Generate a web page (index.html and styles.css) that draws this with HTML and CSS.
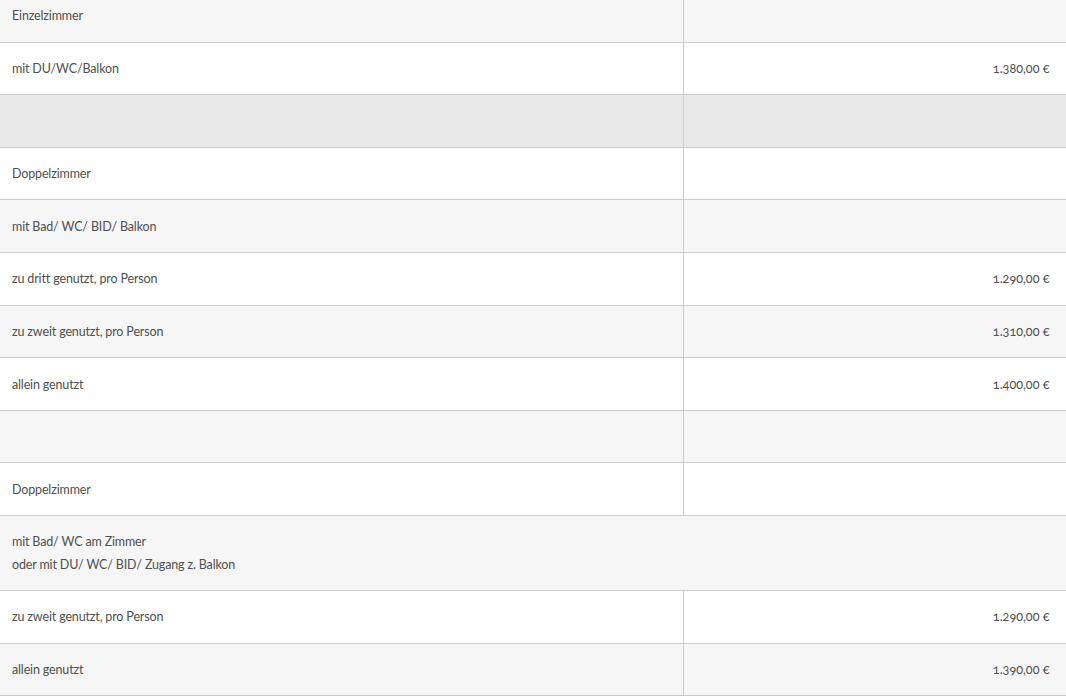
FILE: index.html
```html
<!DOCTYPE html>
<html lang="de">
<head>
<meta charset="utf-8">
<link rel="stylesheet" href="styles.css">
</head>
<body>
<div class="wrap">
<table class="prices">
<colgroup><col class="c1"><col class="c2"></colgroup>
<tbody>
<tr class="odd"><td>Einzelzimmer</td><td></td></tr>
<tr class="even"><td>mit DU/WC/Balkon</td><td class="price">1.380,00 €</td></tr>
<tr class="odd hover"><td>&nbsp;</td><td></td></tr>
<tr class="even"><td>Doppelzimmer</td><td></td></tr>
<tr class="odd"><td>mit Bad/ WC/ BID/ Balkon</td><td></td></tr>
<tr class="even"><td>zu dritt genutzt, pro Person</td><td class="price">1.290,00 €</td></tr>
<tr class="odd"><td>zu zweit genutzt, pro Person</td><td class="price">1.310,00 €</td></tr>
<tr class="even"><td>allein genutzt</td><td class="price">1.400,00 €</td></tr>
<tr class="odd"><td>&nbsp;</td><td></td></tr>
<tr class="even"><td>Doppelzimmer</td><td></td></tr>
<tr class="odd"><td colspan="2">mit Bad/ WC am Zimmer<br>oder mit DU/ WC/ BID/ Zugang z. Balkon</td></tr>
<tr class="even"><td>zu zweit genutzt, pro Person</td><td class="price">1.290,00 €</td></tr>
<tr class="odd"><td>allein genutzt</td><td class="price">1.390,00 €</td></tr>
</tbody>
</table>
</div>
</body>
</html>
```
FILE: styles.css
```css
html, body {
  margin: 0;
  padding: 0;
  background: #ffffff;
  overflow: hidden;
}
.wrap {
  margin-top: -11px;
}
.prices {
  width: 1066px;
  border-collapse: collapse;
  table-layout: fixed;
  font-family: "Lato", "Liberation Sans", sans-serif;
  font-size: 12.5px;
  letter-spacing: -0.15px;
  color: #505050;
}
.c1 { width: 683px; }
.c2 { width: 383px; }
.prices td {
  border: 1px solid #cccccc;
  border-left: none;
  padding: 15.4px 12px 13.8px 12px;
  line-height: 22.4px;
  vertical-align: middle;
  text-align: left;
}
.prices td:last-child {
  border-right: 1px solid #cccccc;
}
.prices tr.odd td { background: #f6f6f6; }
.prices tr.even td { background: #ffffff; }
.prices tr.hover td { background: #e8e8e8; }
.prices td.price {
  text-align: right;
  padding-right: 16px;
  font-size: 12.6px;
  letter-spacing: 0;
  font-variant-numeric: oldstyle-nums;
}
```
